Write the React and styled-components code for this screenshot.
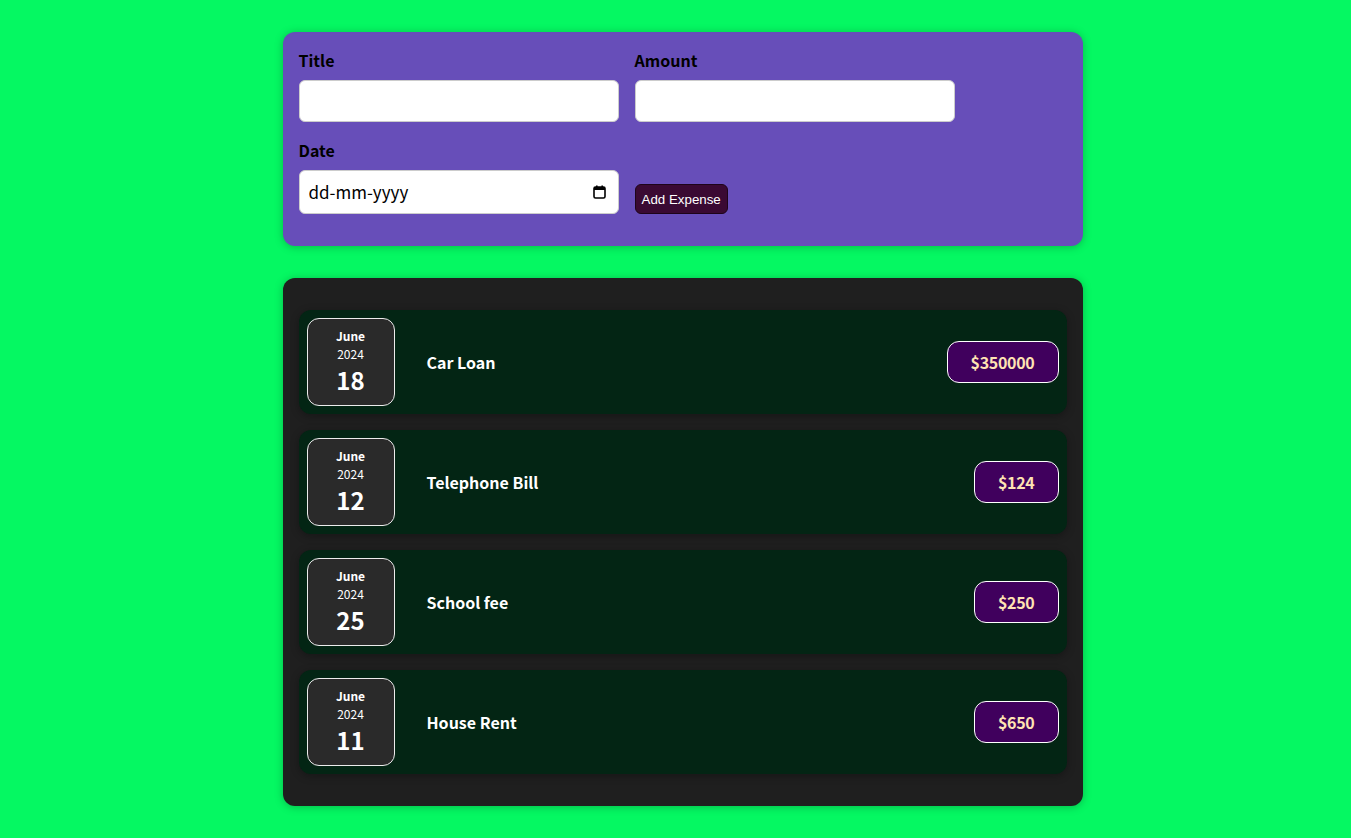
import React from "react";
import styled, { createGlobalStyle } from "styled-components";

const GlobalStyle = createGlobalStyle`
  * {
    box-sizing: border-box;
  }
  html {
    font-family: "Noto Sans CJK JP", "Noto Sans", sans-serif;
  }
  body {
    margin: 0;
    padding-left: 14px;
    background-color: #05f862;
  }
`;

const Card = styled.div`
  border-radius: 12px;
  box-shadow: 0 1px 8px rgba(0, 0, 0, 0.25);
`;

const NewExpense = styled(Card)`
  background-color: #674eb9;
  padding: 1rem;
  margin: 2rem auto;
  width: 50rem;
  max-width: 95%;
`;

const Controls = styled.div`
  display: flex;
  flex-wrap: wrap;
  align-items: flex-end;
  gap: 1rem;
  margin-bottom: 1rem;
  text-align: left;
`;

const Control = styled.div`
  display: flex;
  flex-direction: column;

  label {
    font-weight: bold;
    margin-bottom: 0.5rem;
    display: block;
    line-height: 24px;
    color: #000;
  }

  input {
    font: inherit;
    padding: 0.5rem;
    border-radius: 6px;
    border: 1px solid #ccc;
    width: 20rem;
    max-width: 100%;
    line-height: 24px;
    background: #fff;
  }
`;

const DateField = styled.div`
  display: flex;
  align-items: center;
  width: 20rem;
  height: 44px;
  padding: 0 12px 0 9px;
  border: 1px solid #ccc;
  border-radius: 6px;
  background: #fff;

  && input {
    flex: 1;
    border: none;
    padding: 0;
    width: auto;
    outline: none;
    font-size: 17px;
    color: #000;
  }

  input::placeholder {
    color: #000;
    opacity: 1;
  }
`;

const AddButton = styled.button`
  font-family: "Liberation Sans", Arial, sans-serif;
  font-size: 13.33px;
  line-height: 16px;
  padding: 7px 6px 5px;
  border: 1px solid #1e0419;
  border-radius: 6px;
  background-color: #3a0a33;
  color: #fff;
  cursor: pointer;
`;

const Expenses = styled(Card)`
  padding: 1rem;
  background-color: #1f1f1f;
  margin: 2rem auto;
  width: 50rem;
  max-width: 95%;
`;

const List = styled.ul`
  list-style: none;
  padding: 0;
  margin: 0;
`;

const Item = styled.li`
  display: flex;
  align-items: center;
  gap: 1rem;
  box-shadow: 0 2px 8px rgba(0, 0, 0, 0.3);
  padding: 0.5rem;
  margin: 1rem 0;
  border-radius: 12px;
  background-color: #032514;
`;

const DateBox = styled.div`
  display: flex;
  flex-direction: column;
  width: 5.5rem;
  height: 5.5rem;
  border: 1px solid #ececec;
  background-color: #2a2a2a;
  color: white;
  border-radius: 12px;
  align-items: center;
  justify-content: center;
  flex-shrink: 0;
`;

const Month = styled.div`
  font-size: 0.75rem;
  font-weight: bold;
  line-height: 18px;
`;

const Year = styled.div`
  font-size: 0.75rem;
  line-height: 17px;
`;

const Day = styled.div`
  font-size: 1.5rem;
  font-weight: bold;
  line-height: 36px;
`;

const Description = styled.div`
  display: flex;
  align-items: center;
  gap: 1rem;
  flex: 1;
`;

const Title = styled.h2`
  color: white;
  font-size: 1rem;
  flex: 1;
  margin: 0 1rem;
`;

const Price = styled.div`
  font-size: 1rem;
  font-weight: bold;
  line-height: 24px;
  letter-spacing: -0.3px;
  color: #ffe3b3;
  background-color: #40005d;
  border: 1px solid white;
  padding: 0.5rem 23px;
  border-radius: 12px;
`;

const CalendarIcon = () => (
  <svg width="13" height="14" viewBox="0 0 13 14" fill="none">
    <rect x="1" y="2" width="11" height="11" rx="1.5" stroke="#000" strokeWidth="1.6" />
    <rect x="1" y="2" width="11" height="3" fill="#000" />
    <rect x="3" y="0.5" width="1.6" height="2.5" fill="#000" />
    <rect x="8.4" y="0.5" width="1.6" height="2.5" fill="#000" />
  </svg>
);

const expenses = [
  { id: 1, title: "Car Loan", amount: 350000, month: "June", year: 2024, day: 18 },
  { id: 2, title: "Telephone Bill", amount: 124, month: "June", year: 2024, day: 12 },
  { id: 3, title: "School fee", amount: 250, month: "June", year: 2024, day: 25 },
  { id: 4, title: "House Rent", amount: 650, month: "June", year: 2024, day: 11 },
];

const ExpenseItem = ({ title, amount, month, year, day }) => (
  <Item>
    <DateBox>
      <Month>{month}</Month>
      <Year>{year}</Year>
      <Day>{day}</Day>
    </DateBox>
    <Description>
      <Title>{title}</Title>
      <Price>${amount}</Price>
    </Description>
  </Item>
);

const App = () => {
  return (
    <>
      <GlobalStyle />
      <NewExpense>
        <form onSubmit={(e) => e.preventDefault()}>
          <Controls>
            <Control>
              <label>Title</label>
              <input type="text" />
            </Control>
            <Control>
              <label>Amount</label>
              <input type="number" min="0.01" step="0.01" />
            </Control>
            <Control>
              <label>Date</label>
              <DateField>
                <input type="text" placeholder="dd-mm-yyyy" />
                <CalendarIcon />
              </DateField>
            </Control>
            <AddButton type="submit">Add Expense</AddButton>
          </Controls>
        </form>
      </NewExpense>
      <Expenses>
        <List>
          {expenses.map((e) => (
            <ExpenseItem key={e.id} {...e} />
          ))}
        </List>
      </Expenses>
    </>
  );
};

export default App;
